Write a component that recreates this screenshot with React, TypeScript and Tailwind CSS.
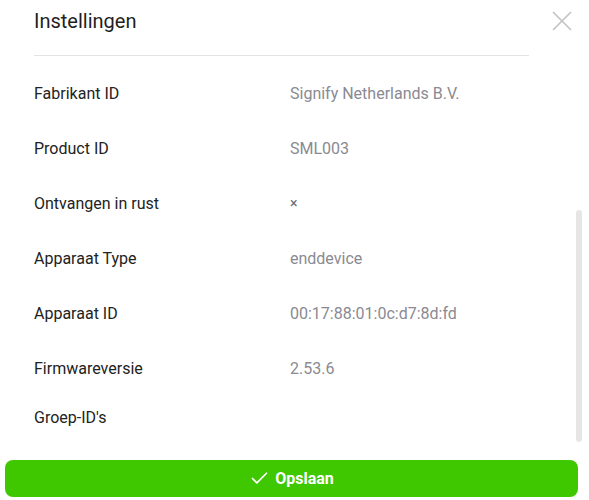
import { X, Check } from "lucide-react";

const rows = [
  { label: "Fabrikant ID", value: "Signify Netherlands B.V." },
  { label: "Product ID", value: "SML003" },
  { label: "Ontvangen in rust", value: "×" },
  { label: "Apparaat Type", value: "enddevice" },
  { label: "Apparaat ID", value: "00:17:88:01:0c:d7:8d:fd" },
  { label: "Firmwareversie", value: "2.53.6" },
];

export default function App() {
  return (
    <div
      className="h-[500px] w-[589px] bg-white flex flex-col overflow-hidden"
      style={{ fontFamily: "Roboto, 'Noto Sans', sans-serif" }}
    >
      <header className="h-[55px] flex items-start justify-between pl-[34px] pr-[10px]">
        <h1 className="text-[20px] leading-[24px] mt-[9px] text-[#1f1f1f]">Instellingen</h1>
        <button className="mt-[4px] text-[#c4c4c4]">
          <X className="w-[34px] h-[34px]" strokeWidth={1.2} />
        </button>
      </header>
      <div className="mx-[34px] mr-[60px] h-px bg-[#e3e3e6]" />

      <div className="relative flex-1 min-h-0">
        <div className="pt-[10px]">
          {rows.map((r) => (
            <div key={r.label} className="h-[55px] flex items-center pl-[34px] text-[16px]">
              <span className="w-[256px] text-[#222]">{r.label}</span>
              <span className={r.value === "×" ? "text-[#6b6b72] text-[14px]" : "text-[#8a8a92]"}>
                {r.value}
              </span>
            </div>
          ))}
          <div className="pl-[34px] pt-[12px] text-[16px] text-[#222] leading-[20px]">Groep-ID's</div>
        </div>
        <div className="absolute right-[7px] top-[154px] w-[6px] h-[232px] rounded-full bg-[#e6e6e6]" />
      </div>

      <div className="pl-[5px] pr-[11px] pb-[3px]">
        <button className="w-full h-[37px] rounded-[8px] bg-[#3fc700] flex items-center justify-center gap-[5px] text-white font-bold text-[16px]">
          <Check className="w-[21px] h-[21px]" strokeWidth={2} />
          Opslaan
        </button>
      </div>
    </div>
  );
}
